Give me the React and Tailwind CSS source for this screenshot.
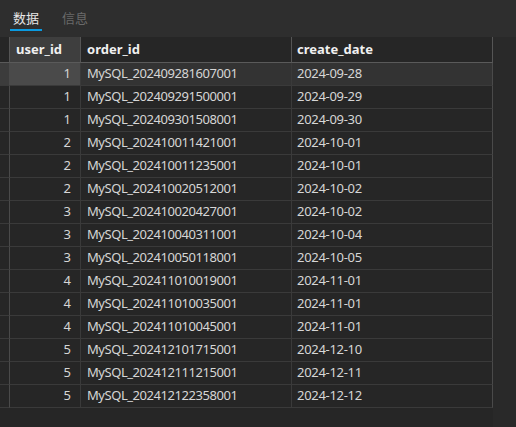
import React from "react";

const rows = [
  ["1", "MySQL_202409281607001", "2024-09-28"],
  ["1", "MySQL_202409291500001", "2024-09-29"],
  ["1", "MySQL_202409301508001", "2024-09-30"],
  ["2", "MySQL_202410011421001", "2024-10-01"],
  ["2", "MySQL_202410011235001", "2024-10-01"],
  ["2", "MySQL_202410020512001", "2024-10-02"],
  ["3", "MySQL_202410020427001", "2024-10-02"],
  ["3", "MySQL_202410040311001", "2024-10-04"],
  ["3", "MySQL_202410050118001", "2024-10-05"],
  ["4", "MySQL_202411010019001", "2024-11-01"],
  ["4", "MySQL_202411010035001", "2024-11-01"],
  ["4", "MySQL_202411010045001", "2024-11-01"],
  ["5", "MySQL_202412101715001", "2024-12-10"],
  ["5", "MySQL_202412111215001", "2024-12-11"],
  ["5", "MySQL_202412122358001", "2024-12-12"],
];

const font = {
  fontFamily: '"Noto Sans", "Noto Sans CJK SC", sans-serif',
};

const App = () => {
  return (
    <div
      className="w-[516px] h-[427px] bg-[#262626] flex flex-col overflow-hidden text-[13px] text-[#d6d6d6]"
      style={font}
    >
      {/* tabs */}
      <div className="h-[37px] bg-[#2e2e2e] flex items-start px-[10px] gap-[20px] shrink-0">
        <div className="flex flex-col items-center w-[32px] pt-[8px]">
          <span className="leading-[20px] text-[#e6e6e6]">数据</span>
          <div className="mt-[1px] h-[2px] w-[32px] bg-[#0a9ae0]" />
        </div>
        <div className="pt-[8px]">
          <span className="leading-[20px] text-[#6a6a6a]">信息</span>
        </div>
      </div>

      {/* grid */}
      <div className="flex flex-1">
        <div className="w-[493px] grid grid-cols-[10px_71px_211px_201px] auto-rows-[23px] grid-rows-[26px] self-start">
          <div className="bg-[#262626] border-r border-r-[#555] border-b border-b-[#5a5a5a]" />
          <div className="bg-[#3e3e3e] border-r border-r-[#555] border-b border-b-[#5a5a5a] px-[6px] flex items-center font-bold text-[#f0f0f0]">
            user_id
          </div>
          <div className="bg-[#262626] border-r border-r-[#555] border-b border-b-[#5a5a5a] px-[6px] flex items-center font-bold text-[#f0f0f0]">
            order_id
          </div>
          <div className="bg-[#262626] border-r border-r-[#555] border-b border-b-[#5a5a5a] px-[5px] flex items-center font-bold text-[#f0f0f0]">
            create_date
          </div>

          {rows.map((r, i) => {
            const sel = i === 0;
            return (
              <React.Fragment key={i}>
                <div
                  className={`border-r border-r-[#4a4a4a] border-b border-b-[#3a3a3a] ${
                    sel ? "bg-[#3c3c3c]" : "bg-[#262626]"
                  }`}
                />
                <div
                  className={`border-r border-r-[#3a3a3a] border-b border-b-[#3a3a3a] flex items-center justify-end pr-[9px] ${
                    sel ? "bg-[#4a4a4a]" : "bg-[#262626]"
                  }`}
                >
                  {r[0]}
                </div>
                <div
                  className={`border-r border-r-[#3a3a3a] border-b border-b-[#3a3a3a] flex items-center px-[6px] tracking-[-0.45px] ${
                    sel ? "bg-[#333333]" : "bg-[#262626]"
                  }`}
                >
                  {r[1]}
                </div>
                <div
                  className={`border-r border-r-[#4a4a4a] border-b border-b-[#3a3a3a] flex items-center px-[5px] tracking-[-0.3px] ${
                    sel ? "bg-[#333333]" : "bg-[#262626]"
                  }`}
                >
                  {r[2]}
                </div>
              </React.Fragment>
            );
          })}
        </div>
        <div className="flex-1 bg-[#292929]" />
      </div>
    </div>
  );
};

export default App;
